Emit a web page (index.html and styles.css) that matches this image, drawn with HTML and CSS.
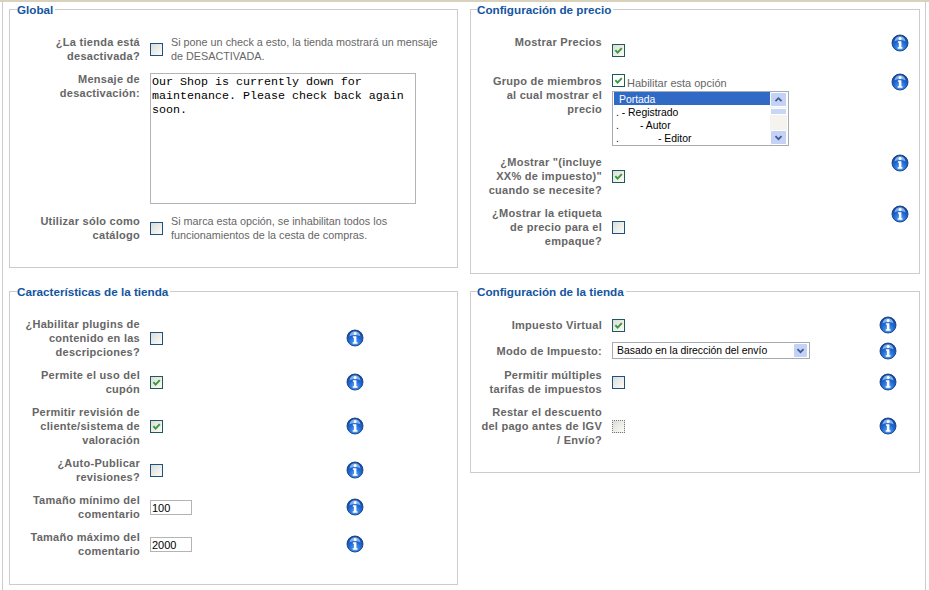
FILE: index.html
```html
<!DOCTYPE html>
<html lang="es">
<head>
<meta charset="utf-8">
<title>Configuración de la tienda</title>
<link rel="stylesheet" href="styles.css">
</head>
<body>
<svg class="defs" width="0" height="0" aria-hidden="true">
  <defs>
    <radialGradient id="ball" cx="50%" cy="78%" r="70%">
      <stop offset="0" stop-color="#58a6f2"/>
      <stop offset="0.55" stop-color="#1f68d6"/>
      <stop offset="1" stop-color="#0f469f"/>
    </radialGradient>
    <symbol id="info" viewBox="0 0 18 18">
      <circle cx="9" cy="9" r="8" fill="url(#ball)" stroke="#14407f" stroke-width="0.9"/>
      <path d="M3.4 7.4C3.8 4 6.2 2.2 9 2.2s5.2 1.8 5.6 5.2C12.6 5.9 5.4 5.9 3.4 7.4z" fill="#9cc6f5" opacity="0.8"/>
      <circle cx="9.1" cy="4.4" r="1.5" fill="#fff"/>
      <path d="M6.9 7.2h3.5v6h1.1v1.5H6.7v-1.5h1.2V8.7h-1z" fill="#fff"/>
    </symbol>
    <symbol id="tick" viewBox="0 0 13 13">
      <path d="M2.8 6.2l2.6 2.9L10.4 3.6" fill="none" stroke="#379a37" stroke-width="2.2"/>
    </symbol>
    <symbol id="chev" viewBox="0 0 15 15">
      <path d="M4 6l3.5 3.5L11 6" fill="none" stroke="#3f5a94" stroke-width="2"/>
    </symbol>
    <symbol id="chevup" viewBox="0 0 15 15">
      <path d="M4 9.5L7.5 6 11 9.5" fill="none" stroke="#3f5a94" stroke-width="2"/>
    </symbol>
  </defs>
</svg>
<main class="page">
  <fieldset class="box box-global">
    <legend>Global</legend>
    <div class="row">
      <div class="lab">¿La tienda está desactivada?</div>
      <div class="ctl ctl-inline">
        <span class="cb"></span>
        <p class="hint">Si pone un check a esto, la tienda mostrará un mensaje de DESACTIVADA.</p>
      </div>
    </div>
    <div class="row row-top">
      <div class="lab">Mensaje de desactivación:</div>
      <div class="ctl"><textarea class="area" readonly>Our Shop is currently down for maintenance. Please check back again soon.</textarea></div>
    </div>
    <div class="row">
      <div class="lab">Utilizar sólo como catálogo</div>
      <div class="ctl ctl-inline">
        <span class="cb"></span>
        <p class="hint">Si marca esta opción, se inhabilitan todos los funcionamientos de la cesta de compras.</p>
      </div>
    </div>
  </fieldset>

  <fieldset class="box box-price">
    <legend>Configuración de precio</legend>
    <div class="row row-top row-first">
      <div class="lab">Mostrar Precios</div>
      <div class="ctl ctl-mid"><span class="cb on"><svg><use href="#tick"/></svg></span></div>
      <svg class="ico"><use href="#info"/></svg>
    </div>
    <div class="row row-top">
      <div class="lab">Grupo de miembros al cual mostrar el precio</div>
      <div class="ctl">
        <div class="enable"><span class="cb on"><svg><use href="#tick"/></svg></span><span class="enable-text">Habilitar esta opción</span></div>
        <div class="list">
          <ul class="opts">
            <li class="sel">Portada</li>
            <li>. - Registrado</li>
            <li><span class="dot">.</span><span class="lv1">- Autor</span></li>
            <li><span class="dot">.</span><span class="lv2">- Editor</span></li>
          </ul>
          <div class="bar">
            <span class="btn"><svg><use href="#chevup"/></svg></span>
            <span class="thumb"></span>
            <span class="btn btn-end"><svg><use href="#chev"/></svg></span>
          </div>
        </div>
      </div>
      <svg class="ico"><use href="#info"/></svg>
    </div>
    <div class="row row-top">
      <div class="lab">¿Mostrar "(incluye XX% de impuesto)" cuando se necesite?</div>
      <div class="ctl ctl-mid"><span class="cb on"><svg><use href="#tick"/></svg></span></div>
      <svg class="ico"><use href="#info"/></svg>
    </div>
    <div class="row row-top">
      <div class="lab">¿Mostrar la etiqueta de precio para el empaque?</div>
      <div class="ctl ctl-mid"><span class="cb"></span></div>
      <svg class="ico"><use href="#info"/></svg>
    </div>
  </fieldset>

  <fieldset class="box box-features">
    <legend>Características de la tienda</legend>
    <div class="row">
      <div class="lab">¿Habilitar plugins de contenido en las descripciones?</div>
      <div class="ctl"><span class="cb"></span></div>
      <svg class="ico"><use href="#info"/></svg>
    </div>
    <div class="row">
      <div class="lab">Permite el uso del cupón</div>
      <div class="ctl"><span class="cb on"><svg><use href="#tick"/></svg></span></div>
      <svg class="ico"><use href="#info"/></svg>
    </div>
    <div class="row">
      <div class="lab">Permitir revisión de cliente/sistema de valoración</div>
      <div class="ctl"><span class="cb on"><svg><use href="#tick"/></svg></span></div>
      <svg class="ico"><use href="#info"/></svg>
    </div>
    <div class="row">
      <div class="lab">¿Auto-Publicar revisiones?</div>
      <div class="ctl"><span class="cb"></span></div>
      <svg class="ico"><use href="#info"/></svg>
    </div>
    <div class="row">
      <div class="lab">Tamaño mínimo del comentario</div>
      <div class="ctl"><input class="num" type="text" value="100" readonly></div>
      <svg class="ico"><use href="#info"/></svg>
    </div>
    <div class="row">
      <div class="lab">Tamaño máximo del comentario</div>
      <div class="ctl"><input class="num" type="text" value="2000" readonly></div>
      <svg class="ico"><use href="#info"/></svg>
    </div>
  </fieldset>

  <fieldset class="box box-shop">
    <legend>Configuración de la tienda</legend>
    <div class="row">
      <div class="lab">Impuesto Virtual</div>
      <div class="ctl"><span class="cb on"><svg><use href="#tick"/></svg></span></div>
      <svg class="ico"><use href="#info"/></svg>
    </div>
    <div class="row">
      <div class="lab">Modo de Impuesto:</div>
      <div class="ctl">
        <div class="drop"><span class="drop-text">Basado en la dirección del envío</span><span class="btn"><svg><use href="#chev"/></svg></span></div>
      </div>
      <svg class="ico"><use href="#info"/></svg>
    </div>
    <div class="row">
      <div class="lab">Permitir múltiples tarifas de impuestos</div>
      <div class="ctl"><span class="cb"></span></div>
      <svg class="ico"><use href="#info"/></svg>
    </div>
    <div class="row">
      <div class="lab">Restar el descuento del pago antes de IGV / Envío?</div>
      <div class="ctl"><span class="cb off"></span></div>
      <svg class="ico"><use href="#info"/></svg>
    </div>
  </fieldset>
</main>
</body>
</html>
```
FILE: styles.css
```css
* { box-sizing: border-box; }
html, body { margin: 0; padding: 0; background: #fff; }
body { height: 590px; overflow: hidden; font-family: "Liberation Sans", Arial, sans-serif; font-size: 11px; color: #666; }
.defs { position: absolute; }
.page {
  margin: 0 3px 0 2px;
  height: 590px;
  border-left: 1px solid #ccc;
  border-right: 1px solid #ccc;
  padding: 0 5px 0 6px;
  display: grid;
  grid-template-columns: 449px 450px;
  grid-template-rows: auto auto;
  column-gap: 12px;
  row-gap: 9px;
  align-items: start;
  align-content: start;
  position: relative;
}
.page::before {
  content: "";
  position: absolute;
  left: -3px; right: -4px; top: 0;
  height: 2px;
  background: #d8d2bc;
}
.box {
  margin: 1px 0 0;
  padding: 18px 0 25px;
  border: 1px solid #ccc;
  min-width: 0;
  display: flex;
  flex-direction: column;
  gap: 9px;
}
.box-global { --ctl: 271px; }
.box-price { --ctl: 270px; padding-left: 1px; }
.box-features { --ctl: 187px; padding-bottom: 26px; margin-top: 0; }
.box-shop { --ctl: 258px; padding-left: 1px; margin-top: 0; }
legend {
  margin-left: 7px;
  padding: 2px 2px 0 0;
  font-size: 11.7px;
  line-height: 14px;
  font-weight: bold;
  color: #14559f;
}
.box-price legend, .box-shop legend { margin-left: 5px; }
.row {
  display: grid;
  grid-template-columns: 131px var(--ctl) 18px;
  column-gap: 9px;
  align-items: center;
}
.row-top { align-items: start; }
.row-first { min-height: 30px; }
.lab {
  padding: 0 1px 0 9px;
  text-align: right;
  font-weight: bold;
  line-height: 14px;
  letter-spacing: 0.27px;
  color: #666;
}
.ctl { min-width: 0; display: flex; flex-direction: column; align-items: flex-start; }
.ctl-inline { flex-direction: row; align-items: center; gap: 8px; width: 295px; }
.ctl-inline .cb { margin-top: 1px; }
.ctl-mid { align-self: center; }
.hint { margin: 0; font-size: 10.8px; line-height: 14px; color: #666; }
.ico { width: 18px; height: 18px; display: block; margin: -1px 0; }
.cb {
  display: block;
  flex: none;
  width: 13px;
  height: 13px;
  border: 1px solid #1c5180;
  background: linear-gradient(135deg, #dcdcd7, #fbfbf9);
}
.cb.on { border-color: #1f5a5a; }
.cb svg { display: block; width: 11px; height: 11px; }
.cb.off { border: 1px dotted #777; }
.enable .cb { background: #fff; }
.area {
  display: block;
  width: 266px;
  height: 131px;
  margin: 1px 0;
  padding: 1px;
  border: 1px solid #b4b4b4;
  border-radius: 0;
  resize: none;
  overflow: hidden;
  font-family: "Liberation Mono", "Courier New", monospace;
  font-size: 11.67px;
  line-height: 14px;
  color: #000;
  outline: none;
}
.num {
  display: block;
  width: 42px;
  height: 15px;
  padding: 1px 1px 0;
  border: 1px solid #b4b4b4;
  border-radius: 0;
  font-family: "Liberation Sans", Arial, sans-serif;
  font-size: 11px;
  color: #000;
  outline: none;
}
.enable { display: flex; align-items: flex-start; height: 17px; }
.enable-text { margin: 2px 0 0 2px; line-height: 14px; color: #666; }
.list {
  display: flex;
  width: 177px;
  height: 55px;
  padding: 0 1px;
  border: 1px solid #a5acb2;
  background: #fff;
  color: #000;
}
.opts {
  flex: 1;
  margin: 0;
  padding: 0;
  list-style: none;
  font-size: 10.4px;
  line-height: 15px;
}
.opts li { height: 13px; padding-left: 2px; white-space: nowrap; }
.opts .sel { background: #316ac5; color: #fff; padding-left: 5px; }
.dot { display: inline-block; width: 24px; }
.lv2 { margin-left: 18px; }
.bar {
  width: 17px;
  display: flex;
  flex-direction: column;
  background: #f4f3ee;
}
.btn {
  display: block;
  flex: none;
  width: 15px;
  height: 15px;
  border: 1px solid #fff;
  border-radius: 2px;
  background: #c3d2f5;
}
.bar .btn { width: 17px; }
.btn svg { display: block; width: 100%; height: 100%; }
.btn-end { margin-top: auto; }
.thumb {
  display: block;
  height: 7px;
  margin-top: 1px;
  background: #c9d7f7;
  border: 1px solid #fff;
}
.drop {
  display: flex;
  align-items: center;
  justify-content: space-between;
  width: 198px;
  height: 17px;
  padding: 0 1px 0 4px;
  border: 1px solid #a5acb2;
  background: #fff;
  color: #000;
  font-size: 10.4px;
}
.drop-text { white-space: nowrap; }
```
